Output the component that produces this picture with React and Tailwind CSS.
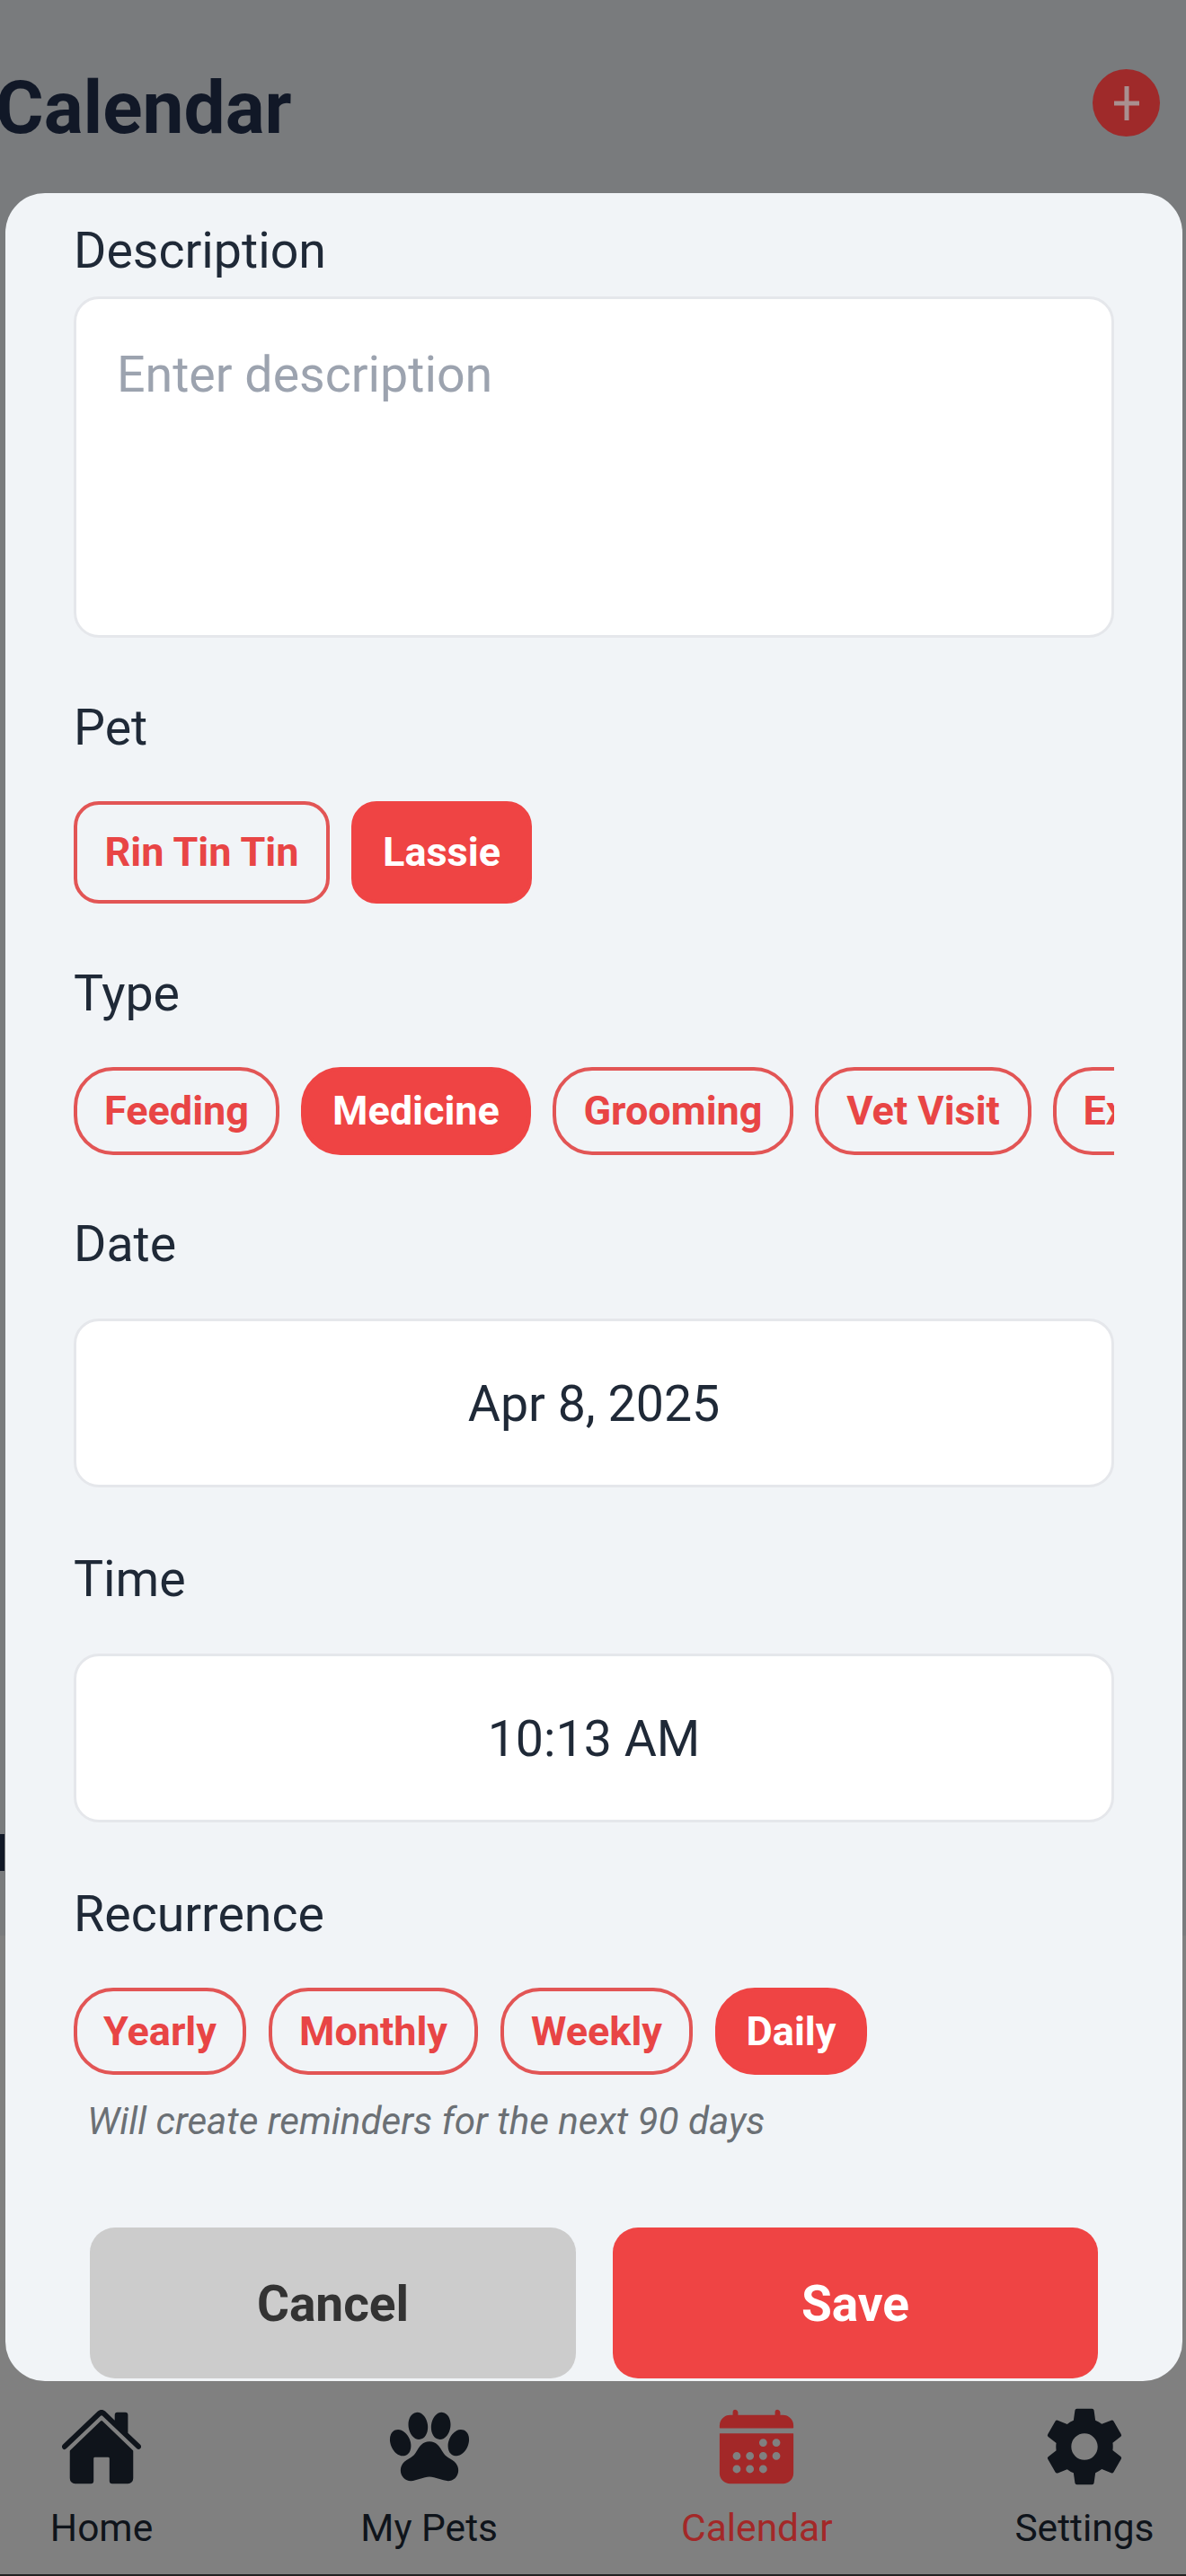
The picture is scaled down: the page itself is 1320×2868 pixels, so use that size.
import { IoHome, IoPaw, IoCalendar, IoSettingsSharp } from "react-icons/io5"

const pets = [
  { label: "Rin Tin Tin", width: "w-[285px]" },
  { label: "Lassie", width: "w-[201px]", active: true },
]
const types = [
  { label: "Feeding", width: "w-[229px]" },
  { label: "Medicine", width: "w-[256px]", active: true },
  { label: "Grooming", width: "w-[268px]" },
  { label: "Vet Visit", width: "w-[241px]" },
  { label: "Exercise", width: "w-[238px]" },
]
const recurrences = [
  { label: "Yearly", width: "w-[192px]" },
  { label: "Monthly", width: "w-[233px]" },
  { label: "Weekly", width: "w-[214px]" },
  { label: "Daily", width: "w-[169px]", active: true },
]
const navItems = [
  { label: "Home", icon: IoHome },
  { label: "My Pets", icon: IoPaw },
  { label: "Calendar", icon: IoCalendar, active: true },
  { label: "Settings", icon: IoSettingsSharp },
]

function Chip({ label, width, active, rounded, height }) {
  return (
    <button
      className={`${width} ${height} ${rounded} shrink-0 flex items-center justify-center border-[4px] text-[45px] font-bold ${
        active ? "border-[#ef4444] bg-[#ef4444] text-white" : "border-[#e25555] text-[#e84545]"
      }`}
    >
      {label}
    </button>
  )
}

function Label({ children, className }) {
  return <div className={`text-[55.5px] leading-[64px] text-[#1f2937] ${className}`}>{children}</div>
}

function ValueBox({ children, className }) {
  return (
    <div className={`h-[188px] rounded-[28px] border-[3px] border-[#e5e7eb] bg-white pt-[4px] flex items-center justify-center text-[55.5px] text-[#1f2937] ${className}`}>
      {children}
    </div>
  )
}

export default function App() {
  return (
    <div className="relative h-[2868px] w-[1320px] overflow-hidden flex flex-col font-['Roboto',sans-serif]">
      {/* dimmed page behind the sheet */}
      <div className="h-[2155px] bg-[#797b7d] pt-[77px] pr-[29px] flex items-start justify-between">
        <h1 className="-ml-[5px] mt-[6px] text-[82px] leading-[74px] font-bold text-[#111827]">Calendar</h1>
        <div className="h-[75px] w-[75px] rounded-full bg-[#9f2a2a] flex items-center justify-center">
          <svg width="32" height="42" viewBox="0 0 32 42" fill="none" stroke="#a99090" strokeWidth="5">
            <path d="M16 2v38M2 21h28" />
          </svg>
        </div>
      </div>
      <div className="flex-1 bg-[#808080] flex flex-col justify-end">
        <nav className="flex justify-between px-[3px] pb-[26px]">
          {navItems.map((item) => {
            const Icon = item.icon
            return (
              <div key={item.label} className={`w-[220px] flex flex-col items-center ${item.active ? "text-[#a32828]" : "text-[#0f141b]"}`}>
                <Icon size={94} />
                <span className="mt-[19px] text-[42.5px] leading-[50px]">{item.label}</span>
              </div>
            )
          })}
        </nav>
        <div className="h-[2px] bg-[#222]" />
      </div>

      {/* sliver of the page content peeking out at the left */}
      <div className="absolute left-0 top-[2042px] h-[41px] w-[5px] bg-[#111827]" />

      {/* add event sheet */}
      <div className="absolute left-[6px] top-[215px] h-[2436px] w-[1310px] overflow-hidden rounded-[44px] bg-[#f1f4f7] px-[76px] pt-[33px]">
        <Label>Description</Label>
        <div className="mt-[18px] h-[380px] rounded-[28px] border-[3px] border-[#e5e7eb] bg-white px-[45px] pt-[53px] text-[55.5px] leading-[64px] text-[#9ca3af]">
          Enter description
        </div>

        <Label className="mt-[69px]">Pet</Label>
        <div className="mt-[49px] flex gap-[24px]">
          {pets.map((p) => (
            <Chip key={p.label} {...p} rounded="rounded-[28px]" height="h-[114px]" />
          ))}
        </div>

        <Label className="mt-[69px]">Type</Label>
        <div className="mt-[49px] flex gap-[24px] overflow-hidden">
          {types.map((t) => (
            <Chip key={t.label} {...t} rounded="rounded-[44px]" height="h-[98px]" />
          ))}
        </div>

        <Label className="mt-[68px]">Date</Label>
        <ValueBox className="mt-[50px]">Apr 8, 2025</ValueBox>

        <Label className="mt-[71px]">Time</Label>
        <ValueBox className="mt-[50px]">10:13 AM</ValueBox>

        <Label className="mt-[71px]">Recurrence</Label>
        <div className="mt-[49px] flex gap-[25px]">
          {recurrences.map((r) => (
            <Chip key={r.label} {...r} rounded="rounded-[44px]" height="h-[97px]" />
          ))}
        </div>
        <p className="mt-[27px] ml-[15px] text-[42.2px] leading-[50px] italic text-[#6b7075]">
          Will create reminders for the next 90 days
        </p>

        <div className="mt-[93px] mx-[18px] flex justify-between">
          <button className="h-[168px] w-[541px] rounded-[28px] bg-[#cccccc] pt-[3px] text-[55px] font-bold text-[#333333]">Cancel</button>
          <button className="h-[168px] w-[540px] rounded-[28px] bg-[#ef4444] pt-[3px] text-[55px] font-bold text-white">Save</button>
        </div>
      </div>
    </div>
  )
}
